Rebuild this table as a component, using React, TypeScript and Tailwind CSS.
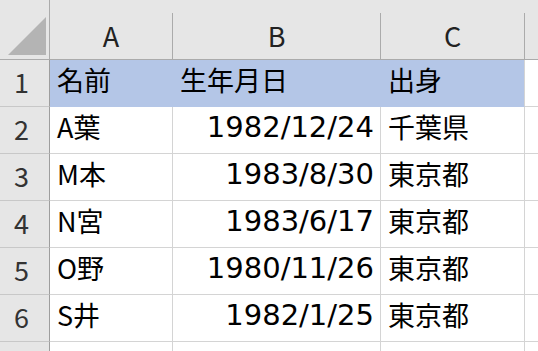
import React from "react";

const font = { fontFamily: '"Noto Sans CJK JP", "Noto Sans", sans-serif' };

type Row = { n: number; a: string; b: string; c: string; head?: boolean };

const rows: Row[] = [
  { n: 1, a: "名前", b: "生年月日", c: "出身", head: true },
  { n: 2, a: "A葉", b: "1982/12/24", c: "千葉県" },
  { n: 3, a: "M本", b: "1983/8/30", c: "東京都" },
  { n: 4, a: "N宮", b: "1983/6/17", c: "東京都" },
  { n: 5, a: "O野", b: "1980/11/26", c: "東京都" },
  { n: 6, a: "S井", b: "1982/1/25", c: "東京都" },
];

function ColHead({ label, w }: { label: string; w: string }) {
  return (
    <div className={`${w} flex flex-col shrink-0`}>
      <div className="h-[13px]" />
      <div className="flex-1 flex items-center justify-center border-r border-[#ababab] text-[27px] text-[#222] leading-none pb-[2px]">
        {label}
      </div>
    </div>
  );
}

export default function App() {
  return (
    <div className="w-[538px] h-[351px] overflow-hidden bg-white text-black" style={font}>
      {/* column header strip */}
      <div className="flex h-[60px] bg-[#e6e6e6] border-b border-[#ababab]">
        <div className="w-[50px] shrink-0 border-r border-[#ababab] relative">
          <svg className="absolute left-0 top-0" width="49" height="59" viewBox="0 0 49 59">
            <polygon points="46,17 46,55 8,55" fill="#b4b4b4" />
          </svg>
        </div>
        <ColHead label="A" w="w-[123px]" />
        <ColHead label="B" w="w-[208px]" />
        <ColHead label="C" w="w-[144px]" />
        <div className="flex-1" />
      </div>

      {rows.map((r) => {
        const cellBorder = r.head ? "border-[#b4c6e7]" : "border-[#d4d4d4]";
        const fill = r.head ? "bg-[#b4c6e7]" : "bg-white";
        return (
          <div key={r.n} className="flex h-[47px] text-[27px] leading-none">
            <div className="w-[50px] shrink-0 bg-[#e6e6e6] border-r border-[#9e9e9e] border-b border-b-[#c8c8c8] flex items-center justify-center text-[#333] pr-[6px] pb-[4px]">
              {r.n}
            </div>
            <div className={`w-[123px] shrink-0 ${fill} border-r border-b ${cellBorder} flex items-center pl-[7px] pb-[7px]`}>
              {r.a}
            </div>
            {r.head ? (
              <div className={`w-[208px] shrink-0 ${fill} border-r border-b ${cellBorder} flex items-center pl-[7px] pb-[7px]`}>
                {r.b}
              </div>
            ) : (
              <div
                className={`w-[208px] shrink-0 ${fill} border-r border-b ${cellBorder} flex items-center justify-end pr-[6px] pb-[5px] text-[29px] font-['DejaVu_Sans',sans-serif]`}
              >
                {r.b}
              </div>
            )}
            <div className={`w-[144px] shrink-0 ${fill} border-b border-r ${r.head ? "border-[#b4c6e7] border-r-[#d4d4d4]" : "border-[#d4d4d4]"} flex items-center pl-[7px] pb-[7px]`}>
              {r.c}
            </div>
            <div className="flex-1 border-b border-[#d4d4d4]" />
          </div>
        );
      })}

      {/* partially visible row 7 */}
      <div className="flex h-[20px]">
        <div className="w-[50px] shrink-0 bg-[#e6e6e6] border-r border-[#9e9e9e]" />
        <div className="w-[123px] shrink-0 border-r border-[#d4d4d4]" />
        <div className="w-[208px] shrink-0 border-r border-[#d4d4d4]" />
        <div className="w-[144px] shrink-0 border-r border-[#d4d4d4]" />
      </div>
    </div>
  );
}
